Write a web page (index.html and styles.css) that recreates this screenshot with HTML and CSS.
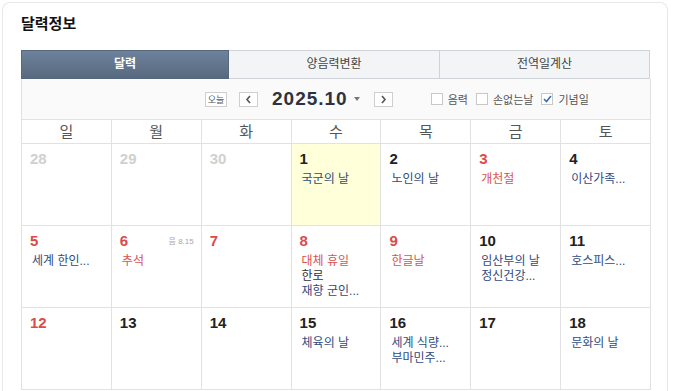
FILE: index.html
```html
<!DOCTYPE html>
<html lang="ko">
  <head>
    <meta charset="UTF-8" />
    <title>달력정보</title>
    <link rel="stylesheet" href="styles.css">
  </head>
  <body>
    <div class="card">
      <h2 class="title">달력정보</h2>
      <div class="tabs">
        <div class="tab on">달력</div>
        <div class="tab">양음력변환</div>
        <div class="tab">전역일계산</div>
      </div>
      <div class="nav">
        <div class="nav-center">
          <span class="btn today">오늘</span>
          <span class="btn arrow">
            <svg width="7" height="9" viewBox="0 0 7 9"><path d="M5 1 L2 4.5 L5 8" fill="none" stroke="#555" stroke-width="1.6"/></svg>
          </span>
          <span class="month">2025.10</span>
          <span class="caret"></span>
          <span class="btn arrow">
            <svg width="7" height="9" viewBox="0 0 7 9"><path d="M2 1 L5 4.5 L2 8" fill="none" stroke="#555" stroke-width="1.6"/></svg>
          </span>
        </div>
        <div class="checks">
          <label><span class="box"></span>음력</label>
          <label><span class="box"></span>손없는날</label>
          <label><span class="box checked"><svg width="9" height="8" viewBox="0 0 9 8"><path d="M1 4 L3.5 6.5 L8 1" fill="none" stroke="#3b6bb0" stroke-width="1.6"/></svg></span>기념일</label>
        </div>
      </div>
      <div class="week">
        <div>일</div><div>월</div><div>화</div><div>수</div><div>목</div><div>금</div><div>토</div>
      </div>
      <div class="grid">
        <div class="cell"><b class="day dim">28</b></div>
        <div class="cell"><b class="day dim">29</b></div>
        <div class="cell"><b class="day dim">30</b></div>
        <div class="cell today-cell"><b class="day">1</b><p class="ev">국군의 날</p></div>
        <div class="cell"><b class="day">2</b><p class="ev">노인의 날</p></div>
        <div class="cell"><b class="day red">3</b><p class="ev hol">개천절</p></div>
        <div class="cell"><b class="day">4</b><p class="ev">이산가족...</p></div>

        <div class="cell"><b class="day red">5</b><p class="ev">세계 한인...</p></div>
        <div class="cell"><b class="day red">6</b><span class="lunar">음 8.15</span><p class="ev hol">추석</p></div>
        <div class="cell"><b class="day red">7</b></div>
        <div class="cell"><b class="day red">8</b><p class="ev hol">대체 휴일</p><p class="ev plain">한로</p><p class="ev">재향 군인...</p></div>
        <div class="cell"><b class="day red">9</b><p class="ev hol">한글날</p></div>
        <div class="cell"><b class="day">10</b><p class="ev">임산부의 날</p><p class="ev">정신건강...</p></div>
        <div class="cell"><b class="day">11</b><p class="ev">호스피스...</p></div>

        <div class="cell"><b class="day red">12</b></div>
        <div class="cell"><b class="day">13</b></div>
        <div class="cell"><b class="day">14</b></div>
        <div class="cell"><b class="day">15</b><p class="ev">체육의 날</p></div>
        <div class="cell"><b class="day">16</b><p class="ev">세계 식량...</p><p class="ev">부마민주...</p></div>
        <div class="cell"><b class="day">17</b></div>
        <div class="cell"><b class="day">18</b><p class="ev">문화의 날</p></div>
      </div>
    </div>
  </body>
</html>
```

FILE: styles.css
```css
* {
  padding: 0;
  margin: 0;
  box-sizing: border-box;
}

body {
  background: #fff;
  font-family: "Liberation Sans", "Noto Sans CJK KR", sans-serif;
  color: #222;
}

.card {
  margin: 2px 0 0 2px;
  width: 666px;
  border: 1px solid #e8e8e8;
  border-bottom: none;
  border-radius: 8px 8px 0 0;
  padding: 11px 16px 0 18px;
  height: 389px;
}

.title {
  font-size: 15px;
  font-weight: bold;
  color: #111;
  height: 36px;
  line-height: 20px;
}

.tabs {
  display: flex;
  height: 29px;
}

.tab {
  width: 211px;
  text-align: center;
  font-size: 12px;
  line-height: 27px;
  color: #444;
  background: #f3f4f6;
  border: 1px solid #cfd3d9;
  border-left: none;
}

.tab:last-child {
  width: 210px;
}

.tab.on {
  width: 208px;
  color: #fff;
  font-weight: bold;
  background: linear-gradient(#6e829c, #57697f);
  border: 1px solid #56687e;
}

.nav {
  height: 40px;
  background: #fafafa;
  border-left: 1px solid #e2e2e2;
  border-right: 1px solid #e2e2e2;
  display: flex;
  align-items: center;
}

.nav-center {
  display: flex;
  align-items: center;
  margin-left: 183px;
}

.btn {
  display: inline-flex;
  align-items: center;
  justify-content: center;
  height: 15px;
  border: 1px solid #cfcfcf;
  background: #fff;
  font-size: 9px;
  color: #555;
}

.today {
  width: 22px;
  margin-right: 12px;
}

.arrow {
  width: 19px;
}

.month {
  font-size: 19px;
  font-weight: bold;
  color: #2e3240;
  margin: 0 6px 0 14px;
  letter-spacing: 1px;
}

.caret {
  width: 0;
  height: 0;
  border-left: 3.5px solid transparent;
  border-right: 3.5px solid transparent;
  border-top: 4px solid #777;
  margin-right: 14px;
}

.checks {
  display: flex;
  align-items: center;
  margin-left: 38px;
}

.checks label {
  display: flex;
  align-items: center;
  font-size: 11px;
  color: #555;
  margin-right: 8px;
}

.box {
  width: 12px;
  height: 12px;
  border: 1px solid #c8c8c8;
  background: #fff;
  margin-right: 5px;
  display: inline-flex;
  align-items: center;
  justify-content: center;
}

.week {
  display: grid;
  grid-template-columns: repeat(7, 1fr);
  height: 25px;
  border: 1px solid #e2e2e2;
  border-left: none;
  background: #fff;
}

.week div {
  text-align: center;
  font-size: 15px;
  line-height: 23px;
  color: #555;
  border-left: 1px solid #e2e2e2;
}

.grid {
  display: grid;
  grid-template-columns: repeat(7, 1fr);
  grid-auto-rows: 82px;
  border-right: 1px solid #e2e2e2;
}

.cell {
  position: relative;
  border-left: 1px solid #e2e2e2;
  border-bottom: 1px solid #e2e2e2;
  padding: 5px 6px 0 8px;
}

.today-cell {
  background: #ffffd9;
}

.day {
  display: block;
  font-size: 15px;
  font-weight: bold;
  color: #222;
  height: 23px;
  line-height: 20px;
}

.day.dim {
  color: #d0d0d0;
}

.day.red {
  color: #dc4a4a;
}

.lunar {
  position: absolute;
  top: 9px;
  right: 7px;
  font-size: 8px;
  color: #a8a8a8;
}

.ev {
  font-size: 12px;
  line-height: 15px;
  color: #2f4b7e;
  padding-left: 2px;
  white-space: nowrap;
}

.ev.hol {
  color: #d9534f;
}

.ev.plain {
  color: #333;
}
```
